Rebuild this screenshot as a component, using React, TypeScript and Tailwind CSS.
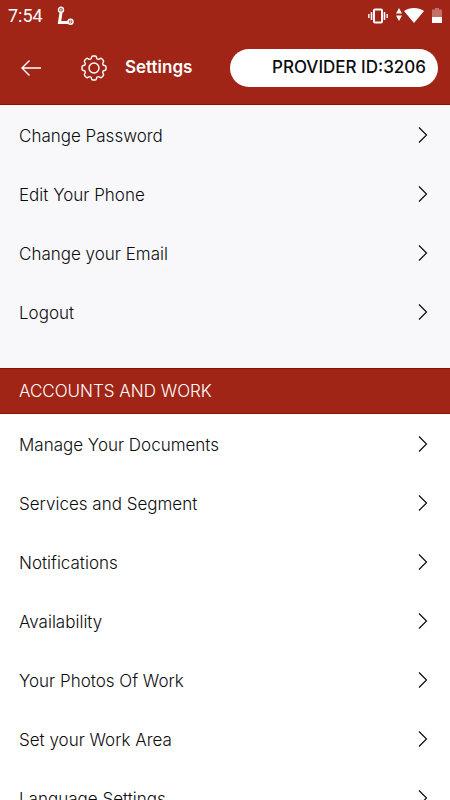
type Section = {
  title?: string;
  items: string[];
};

const sections: Section[] = [
  {
    items: ["Change Password", "Edit Your Phone", "Change your Email", "Logout"],
  },
  {
    title: "ACCOUNTS AND WORK",
    items: [
      "Manage Your Documents",
      "Services and Segment",
      "Notifications",
      "Availability",
      "Your Photos Of Work",
      "Set your Work Area",
      "Language Settings",
    ],
  },
];

const gearTeeth = [0, 45, 90, 135, 180, 225, 270, 315];

function StatusBar() {
  return (
    <div className="flex h-8 items-center pl-2 pr-2 font-['Roboto',sans-serif]">
      <span className="text-lg">7:54</span>
      <svg className="ml-3 size-5" viewBox="0 0 20 20" fill="none" stroke="currentColor">
        <path d="M6 6.500 4.500 16.500H14" strokeWidth="3" />
        <circle cx="6" cy="3.800" r="2.500" strokeWidth="1.400" />
        <circle cx="15.500" cy="15.800" r="2.500" strokeWidth="1.400" />
        <path d="M5.200 4.800 6 2.600l.8 2.200M15 14.600v2.400h1v-2.400z" strokeWidth="0.700" />
      </svg>
      <div className="ml-auto flex items-center">
        <svg className="h-4 w-5" viewBox="0 0 20 16" fill="none" stroke="currentColor">
          <rect x="6" y="1.500" width="8" height="13" rx="1" strokeWidth="2" />
          <path d="M3.500 4v8M16.500 4v8" strokeWidth="1.600" />
          <path d="M0.800 6v4M19.200 6v4" strokeWidth="1.400" />
        </svg>
        <svg className="ml-2 h-4 w-1.5" viewBox="0 0 6 16" fill="currentColor">
          <path d="M3 0l3 5.500H0zM3 13l3-5.500H0z" />
        </svg>
        <svg className="ml-0.5 h-4 w-5" viewBox="0 0 20 16" fill="currentColor">
          <path d="M0 3C5.500-1 14.500-1 20 3L10 15z" />
        </svg>
        <svg className="ml-2 h-4 w-2.5" viewBox="0 0 10 16" fill="currentColor">
          <path d="M3 0h4v1.500h3V9H0V1.500h3z" opacity="0.35" />
          <path d="M0 9h10v6H0z" />
        </svg>
      </div>
    </div>
  );
}

function GearIcon() {
  return (
    <svg className="size-[26px]" viewBox="-13 -13 26 26" fill="none" stroke="currentColor" strokeWidth="1.400">
      {gearTeeth.map((angle) => (
        <path
          key={angle}
          d="M-3.600-8.700C-2-9.400-3-12-1.300-12H1.300C3-12 2-9.400 3.600-8.700"
          transform={`rotate(${angle})`}
        />
      ))}
      <circle r="5" />
    </svg>
  );
}

function SettingsRow({ label }: { label: string }) {
  return (
    <li>
      <button
        type="button"
        className="flex h-[59px] w-full items-center justify-between pl-[19px] pr-[22px] text-left text-[17px] font-light"
      >
        {label}
        <svg className="h-5 w-2.5" viewBox="0 0 10 20" fill="none" stroke="currentColor" strokeWidth="1.200">
          <path d="M1 0.500 8.500 8 1 15.500" />
        </svg>
      </button>
    </li>
  );
}

export default function App() {
  return (
    <div className="flex h-screen flex-col bg-white font-['Inter',sans-serif] text-[#0c0c0e]">
      <header className="shrink-0 border-b border-[#8f0f08] bg-[#a02516] text-white">
        <StatusBar />
        <div className="flex h-[72px] items-center pl-[21px] pr-3">
          <button type="button" aria-label="Back">
            <svg className="h-4 w-5" viewBox="0 0 20 16" fill="none" stroke="currentColor" strokeWidth="1.400">
              <path d="M20 8H1.500M8.500 0.500 1 8l7.500 7.500" />
            </svg>
          </button>
          <div className="ml-10">
            <GearIcon />
          </div>
          <h1 className="ml-[18px] text-[17px] font-semibold">Settings</h1>
          <div className="ml-auto flex h-[38px] w-[208px] items-center justify-end rounded-full bg-white pr-3 text-[17px] font-medium text-[#0c0c0e]">
            PROVIDER ID:3206
          </div>
        </div>
      </header>
      <main className="min-h-0 flex-1 overflow-y-auto [scrollbar-width:none]">
        {sections.map((section) =>
          section.title ? (
            <section key={section.title}>
              <h2 className="flex h-[46px] items-center border-y border-[#8f0f08] bg-[#a02516] pt-0.5 pl-[19px] text-[17px] font-light text-white">
                {section.title}
              </h2>
              <ul className="pt-0.5">
                {section.items.map((item) => (
                  <SettingsRow key={item} label={item} />
                ))}
              </ul>
            </section>
          ) : (
            <ul key="general" className="bg-[#f8f8fb] pt-0.5 pb-[25px]">
              {section.items.map((item) => (
                <SettingsRow key={item} label={item} />
              ))}
            </ul>
          ),
        )}
      </main>
    </div>
  );
}
